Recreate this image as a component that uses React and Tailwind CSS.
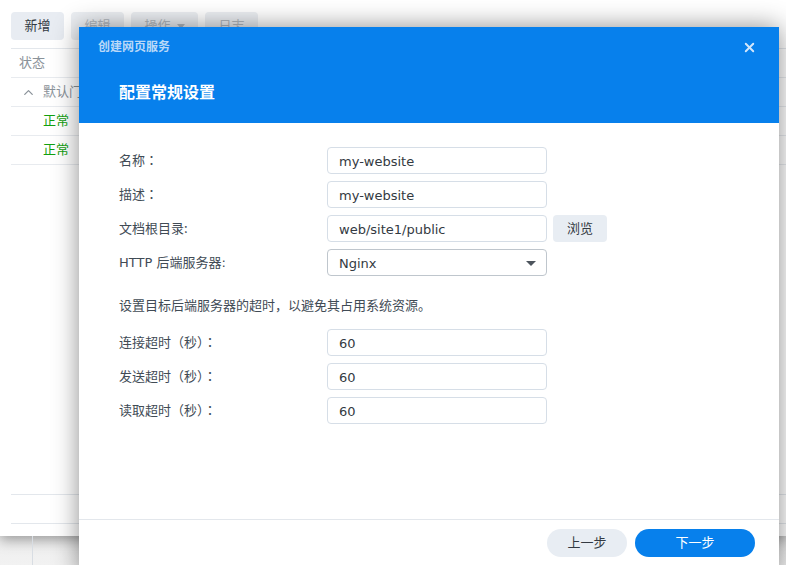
import React from 'react';
import { X, ChevronUp } from 'lucide-react';

const font = { fontFamily: '"DejaVu Sans", "Noto Sans CJK SC", sans-serif' };

const TextField = ({ value }) => (
  <div className="w-[220px] h-[27px] border border-[#d6dee7] rounded-[4px] bg-white flex items-center px-[11px] pt-[2px] text-[13px] text-[#333a42]">
    {value}
  </div>
);

// full-width colon drawn with the TC face so it sits centred in its box
const FormRow = ({ label, colon, children }) => (
  <div className="flex items-center h-[27px]">
    <div className="w-[208px] text-[13px] text-[#414b55]">
      <span className="font-['Noto_Sans_CJK_SC',sans-serif]">{label}</span>
      {colon && <span className="font-['Noto_Sans_CJK_TC',sans-serif]">：</span>}
    </div>
    {children}
  </div>
);

const ToolbarButton = ({ children, disabled, width }) => (
  <div
    className={
      (disabled
        ? 'h-[28px] rounded-[4px] bg-[#eceff3] text-[#b3b9c0] text-[13px] flex items-center justify-center gap-1 '
        : 'h-[28px] rounded-[4px] bg-[#e8ecf2] text-[#333a42] text-[13px] flex items-center justify-center gap-1 ') + width
    }
  >
    {children}
  </div>
);

const App = () => {
  return (
    <div
      className="relative w-[786px] h-[565px] overflow-hidden bg-gradient-to-b from-[#7d7d7d] via-[#c4c4c4] to-[#f2f2f2]"
      style={font}
    >
      {/* Background window */}
      <div className="h-[536px] bg-white pl-[11px] pt-[12px] shadow-[0_4px_12px_rgba(0,0,0,0.35)] relative">
        <div className="flex gap-[7px]">
          <ToolbarButton width="w-[53px]">新增</ToolbarButton>
          <ToolbarButton disabled width="w-[53px]">编辑</ToolbarButton>
          <ToolbarButton disabled width="w-[67px]">
            操作
            <svg width="8" height="5" viewBox="0 0 8 5" className="ml-[2px]">
              <path d="M0 0h8L4 5z" fill="#b3b9c0" />
            </svg>
          </ToolbarButton>
          <ToolbarButton disabled width="w-[53px]">日志</ToolbarButton>
        </div>
        <div className="mt-[8px] border-t border-[#e3e7ec]">
          <div className="h-[29px] flex items-center pl-[8px] text-[13px] text-[#8a9299] border-b border-[#e8ebef]">
            状态
          </div>
          <div className="h-[29px] flex items-center pl-[10px] text-[13px] text-[#8a9299] border-b border-[#e8ebef]">
            <ChevronUp size={15} strokeWidth={2} className="text-[#8a9299]" />
            <span className="ml-[7px]">默认门户</span>
          </div>
          <div className="h-[29px] flex items-center pl-[32px] text-[13px] text-[#11a00f] border-b border-[#e8ebef]">
            正常
          </div>
          <div className="h-[29px] flex items-center pl-[32px] text-[13px] text-[#11a00f] border-b border-[#e8ebef]">
            正常
          </div>
        </div>
        <div className="absolute left-[11px] right-0 top-[494px] border-t border-[#e3e7ec]" />
        <div className="absolute left-[11px] right-0 top-[523px] border-t border-[#e3e7ec]" />
      </div>
      <div className="absolute left-[32px] top-[536px] bottom-0 border-l border-[#d8dde3]" />

      {/* Modal */}
      <div className="absolute left-[79px] top-[27px] w-[700px] h-[548px] bg-white flex flex-col shadow-[0_0_24px_rgba(0,0,0,0.45)]">
        <div className="h-[96px] bg-[#0780ec] relative shrink-0">
          <div className="absolute left-[19px] top-[12px] text-[12px] font-bold text-[#b9d8f8] leading-[16px]">
            创建网页服务
          </div>
          <X
            size={15}
            strokeWidth={3}
            className="absolute right-[22px] top-[13px] text-[#d3e6fb]"
          />
          <div className="absolute left-[40px] top-[55px] text-[16px] font-bold text-white leading-[22px]">
            配置常规设置
          </div>
        </div>

        <div className="flex-1 pl-[40px] pt-[24px]">
          <div className="flex flex-col gap-[7px]">
            <FormRow label="名称" colon>
              <TextField value="my-website" />
            </FormRow>
            <FormRow label="描述" colon>
              <TextField value="my-website" />
            </FormRow>
            <FormRow label="文档根目录:">
              <TextField value="web/site1/public" />
              <div className="ml-[6px] w-[54px] h-[27px] rounded-[4px] bg-[#e8edf3] text-[13px] text-[#333a42] flex items-center justify-center">
                浏览
              </div>
            </FormRow>
            <div className="flex items-center h-[27px]">
              <div className="w-[208px] text-[13px] text-[#414b55]">HTTP 后端服务器:</div>
              <div className="w-[220px] h-[27px] border border-[#bfc6cd] rounded-[4px] bg-white flex items-center justify-between pl-[11px] pt-[2px] pr-[10px] text-[13px] text-[#333a42]">
                Nginx
                <svg width="10" height="5" viewBox="0 0 10 5">
                  <path d="M0 0h10L5 5z" fill="#4d555d" />
                </svg>
              </div>
            </div>
          </div>

          <div className="mt-[19px] h-[20px] leading-[20px] text-[13px] text-[#414b55] font-['Noto_Sans_CJK_SC',sans-serif]">
            设置目标后端服务器的超时，以避免其占用系统资源。
          </div>

          <div className="mt-[14px] flex flex-col gap-[7px]">
            <FormRow label="连接超时（秒）" colon>
              <TextField value="60" />
            </FormRow>
            <FormRow label="发送超时（秒）" colon>
              <TextField value="60" />
            </FormRow>
            <FormRow label="读取超时（秒）" colon>
              <TextField value="60" />
            </FormRow>
          </div>
        </div>

        <div className="h-[56px] shrink-0 border-t border-[#e3e7ec] flex justify-end items-start gap-[8px] pt-[9px] pr-[24px]">
          <div className="w-[80px] h-[28px] rounded-full bg-[#e8edf3] text-[13px] text-[#333a42] flex items-center justify-center">
            上一步
          </div>
          <div className="w-[120px] h-[28px] rounded-full bg-[#0780ec] text-[13px] text-white flex items-center justify-center">
            下一步
          </div>
        </div>
      </div>
    </div>
  );
};

export default App;
